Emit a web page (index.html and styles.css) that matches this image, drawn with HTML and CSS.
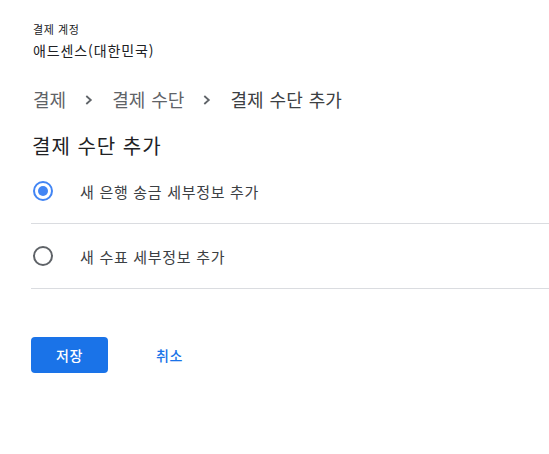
FILE: index.html
```html
<!DOCTYPE html>
<html lang="ko">
<head>
<meta charset="utf-8">
<link rel="stylesheet" href="styles.css">
</head>
<body>
<div class="page">
  <div class="account">
    <div class="account-label">결제 계정</div>
    <div class="account-name">애드센스(대한민국)</div>
  </div>
  <nav class="crumbs">
    <span class="crumb">결제</span>
    <svg class="chev" viewBox="0 0 8 10" width="8" height="10"><path d="M1.3 1 5.8 5 1.3 9" fill="none" stroke="#5f6368" stroke-width="1.8"/></svg>
    <span class="crumb">결제 수단</span>
    <svg class="chev" viewBox="0 0 8 10" width="8" height="10"><path d="M1.3 1 5.8 5 1.3 9" fill="none" stroke="#5f6368" stroke-width="1.8"/></svg>
    <span class="crumb current">결제 수단 추가</span>
  </nav>
  <h2 class="title">결제 수단 추가</h2>
  <div class="options">
    <label class="option">
      <span class="radio checked"><span class="dot"></span></span>
      <span class="option-text">새 은행 송금 세부정보 추가</span>
    </label>
    <label class="option">
      <span class="radio"></span>
      <span class="option-text">새 수표 세부정보 추가</span>
    </label>
  </div>
  <div class="actions">
    <button class="btn-primary">저장</button>
    <button class="btn-text">취소</button>
  </div>
</div>
</body>
</html>
```
FILE: styles.css
```css
* { box-sizing: border-box; }
html, body { margin: 0; padding: 0; background: #fff; }
body {
  font-family: "Noto Sans CJK KR", "Noto Sans", Roboto, sans-serif;
  color: #202124;
}
.page { padding: 21px 0 0 31px; }
.account-label { font-size: 11px; line-height: 16px; letter-spacing: 0.6px; color: #202124; padding-left: 2px; }
.account-name { font-size: 14px; line-height: 20px; margin-top: 3px; letter-spacing: 0.9px; color: #202124; padding-left: 2px; }
.crumbs {
  display: flex; align-items: center;
  margin-top: 27px; height: 24px; padding-left: 2px;
  font-size: 18px; color: #5f6368; word-spacing: 1px;
}
.chev { margin: 1px 19px 0 19px; flex: none; }
.crumb.current { color: #3c4043; }
.title {
  margin: 22px 0 0; padding-left: 1px; font-weight: 400; font-size: 20px; line-height: 26px;
  letter-spacing: 1px; color: #202124;
}
.options { margin-top: 0; }
.option {
  display: flex; align-items: center;
  height: 65px; border-bottom: 1px solid #dadce0;
}
.radio {
  width: 20px; height: 20px; border-radius: 50%;
  border: 2px solid #5f6368; margin-left: 2px; flex: none;
  display: flex; align-items: center; justify-content: center;
}
.radio.checked { border-color: #4285f4; }
.dot { width: 10px; height: 10px; border-radius: 50%; background: #4285f4; }
.option-text { margin-left: 27px; font-size: 15px; letter-spacing: 0.7px; color: #3c4043; }
.actions { display: flex; align-items: center; margin-top: 48px; }
.btn-primary {
  width: 77px; height: 36px; border: 0; border-radius: 4px;
  background: #1a73e8; color: #fff; font: inherit; font-size: 14px; font-weight: 500; letter-spacing: 0.5px;
}
.btn-text {
  margin-left: 24px; height: 36px; padding: 0 24px; border: 0; background: none;
  font: inherit; font-size: 14px; font-weight: 500; color: #1a73e8; letter-spacing: 0.5px;
}
```
